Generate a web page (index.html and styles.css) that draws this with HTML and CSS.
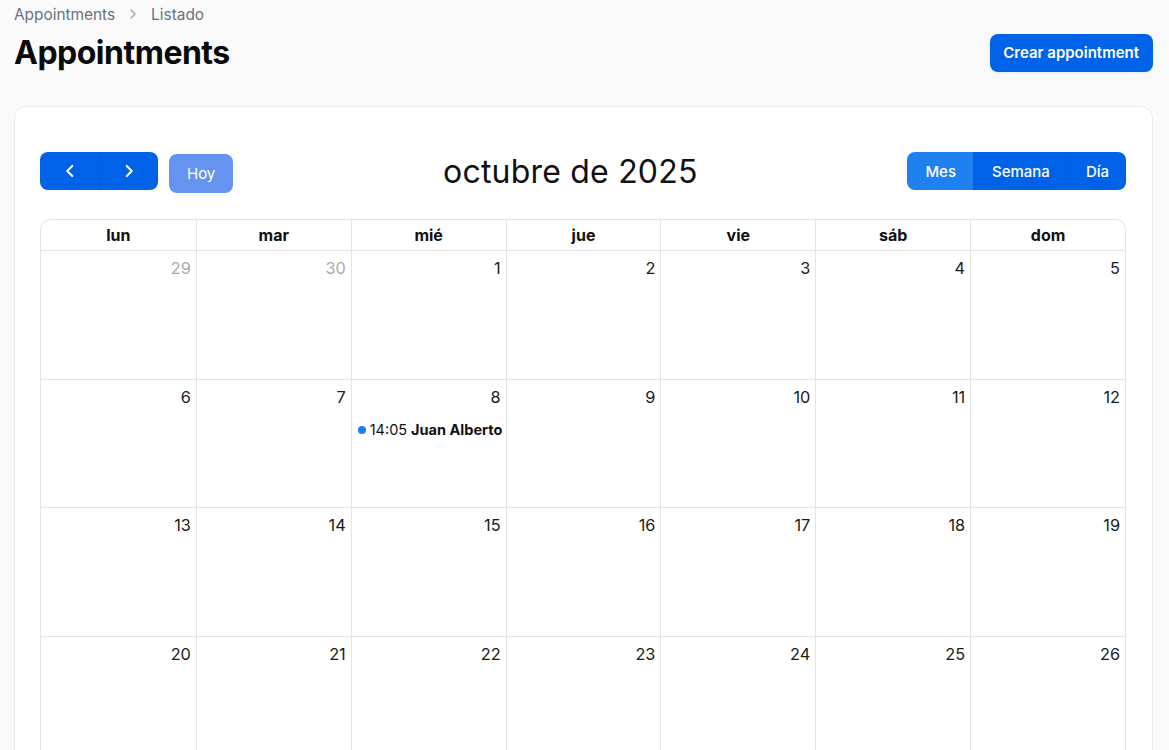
FILE: index.html
```html
<!DOCTYPE html>
<html lang="es">
<head>
<meta charset="utf-8">
<title>Appointments - Listado</title>
<link rel="stylesheet" href="styles.css">
</head>
<body>
<div class="page">
  <nav class="breadcrumbs">
    <a href="#">Appointments</a>
    <svg class="crumb-sep" viewBox="0 0 20 20" width="16" height="16"><path d="M7.5 5l5 5-5 5" fill="none" stroke="currentColor" stroke-width="1.6" stroke-linecap="round" stroke-linejoin="round"/></svg>
    <span>Listado</span>
  </nav>

  <header class="page-header">
    <h1 class="page-title">Appointments</h1>
    <a class="btn-primary" href="#">Crear appointment</a>
  </header>

  <section class="card">
    <div class="toolbar">
      <div class="toolbar-left">
        <div class="btn-group">
          <button class="cal-btn nav-btn" aria-label="prev">
            <svg viewBox="0 0 16 16" width="18" height="18"><path d="M10 3.5L5.5 8l4.5 4.5" fill="none" stroke="#fff" stroke-width="1.8" stroke-linecap="round" stroke-linejoin="round"/></svg>
          </button>
          <button class="cal-btn nav-btn" aria-label="next">
            <svg viewBox="0 0 16 16" width="18" height="18"><path d="M6 3.5L10.5 8 6 12.5" fill="none" stroke="#fff" stroke-width="1.8" stroke-linecap="round" stroke-linejoin="round"/></svg>
          </button>
        </div>
        <button class="cal-btn today-btn" disabled>Hoy</button>
      </div>
      <h2 class="cal-title">octubre de 2025</h2>
      <div class="btn-group">
        <button class="cal-btn view-btn active">Mes</button>
        <button class="cal-btn view-btn">Semana</button>
        <button class="cal-btn view-btn">Día</button>
      </div>
    </div>

    <div class="month">
      <div class="dow">lun</div>
      <div class="dow">mar</div>
      <div class="dow">mié</div>
      <div class="dow">jue</div>
      <div class="dow">vie</div>
      <div class="dow">sáb</div>
      <div class="dow">dom</div>

      <div class="day other"><span class="num">29</span></div>
      <div class="day other"><span class="num">30</span></div>
      <div class="day"><span class="num">1</span></div>
      <div class="day"><span class="num">2</span></div>
      <div class="day"><span class="num">3</span></div>
      <div class="day"><span class="num">4</span></div>
      <div class="day"><span class="num">5</span></div>

      <div class="day"><span class="num">6</span></div>
      <div class="day"><span class="num">7</span></div>
      <div class="day">
        <span class="num">8</span>
        <div class="event"><span class="dot"></span><span class="ev-time">14:05</span> <b class="ev-title">Juan Alberto</b></div>
      </div>
      <div class="day"><span class="num">9</span></div>
      <div class="day"><span class="num">10</span></div>
      <div class="day"><span class="num">11</span></div>
      <div class="day"><span class="num">12</span></div>

      <div class="day"><span class="num">13</span></div>
      <div class="day"><span class="num">14</span></div>
      <div class="day"><span class="num">15</span></div>
      <div class="day"><span class="num">16</span></div>
      <div class="day"><span class="num">17</span></div>
      <div class="day"><span class="num">18</span></div>
      <div class="day"><span class="num">19</span></div>

      <div class="day"><span class="num">20</span></div>
      <div class="day"><span class="num">21</span></div>
      <div class="day"><span class="num">22</span></div>
      <div class="day"><span class="num">23</span></div>
      <div class="day"><span class="num">24</span></div>
      <div class="day"><span class="num">25</span></div>
      <div class="day"><span class="num">26</span></div>
    </div>
  </section>
</div>
</body>
</html>
```

FILE: styles.css
```css
/* Appointments listing, month calendar */

body
{ margin: 0;
background: #fafafa;
font-family: Inter, "Noto Sans", sans-serif;
color: #111;
}

.page
{ padding: 0 16px 0 14px;
}

/* Breadcrumbs */

.breadcrumbs
{ display: flex;
align-items: center;
gap: 10px;
height: 28px;
font-size: 15.4px;
color: #6b7280;
}

.breadcrumbs a
{ color: #6b7280;
text-decoration: none;
}

.crumb-sep
{ color: #9ca3af;
}

/* Header */

.page-header
{ display: flex;
align-items: center;
justify-content: space-between;
margin-top: 6px;
}

.page-title
{ margin: 0;
font-size: 32px;
font-weight: 700;
letter-spacing: -0.5px;
line-height: 38px;
color: #0a0a0a;
}

.btn-primary
{ display: inline-block;
background: #0062e6;
color: #fff;
font-size: 15px;
font-weight: 600;
text-decoration: none;
padding: 0 14px 0 13px;
line-height: 38px;
border-radius: 8px;
box-shadow: 0 1px 2px rgba(0,0,0,0.08);
}

/* Card */

.card
{ margin-top: 34px;
background: #fff;
border: 1px solid #ececec;
border-radius: 12px;
padding: 45px 26px 20px 25px;
}

/* Toolbar */

.toolbar
{ display: flex;
align-items: flex-start;
justify-content: space-between;
height: 41px;
margin-bottom: 26px;
}

.toolbar-left
{ display: flex;
align-items: flex-start;
gap: 11px;
}

.btn-group
{ display: flex;
border-radius: 8px;
overflow: hidden;
height: 38px;
}

.cal-btn
{ border: 0;
margin: 0;
font-family: inherit;
font-size: 15px;
color: #fff;
background: #0062e6;
cursor: pointer;
}

.nav-btn
{ width: 59px;
display: flex;
align-items: center;
justify-content: center;
}

.nav-btn + .nav-btn
{ border-left: 1px solid #0a58cc;
}

.today-btn
{ height: 39px;
padding: 0 18px;
border-radius: 8px;
background: #6594f0;
margin-top: 2px;
}

.cal-title
{ margin: 0;
font-size: 32px;
line-height: 40px;
font-weight: 400;
color: #111;
letter-spacing: 0.2px;
}

.view-btn
{ padding: 0 17px 0 18px;
font-weight: 500;
}

.view-btn.active
{ background: #1f80ef;
}

.view-btn + .view-btn
{ border-left: 1px solid #0a5cd6;
}

/* Month grid */

.month
{ display: grid;
grid-template-columns: repeat(7, minmax(0, 1fr));
grid-template-rows: 31px;
grid-auto-rows: 128.7px;
border: 1px solid #e5e5e5;
border-bottom: 0;
border-radius: 10px 10px 0 0;
overflow: hidden;
}

.month .dow
{ line-height: 30px;
text-align: center;
font-weight: 700;
font-size: 16px;
color: #111;
border-bottom: 1px solid #e5e5e5;
border-left: 1px solid #e5e5e5;
}

.month .day
{ border-left: 1px solid #e5e5e5;
border-bottom: 1px solid #e5e5e5;
padding: 5px 5px 0 5px;
display: flex;
flex-direction: column;
align-items: flex-end;
}

.month .dow:nth-child(7n+1),
.month .day:nth-child(7n+1)
{ border-left: 0;
}

.num
{ font-size: 16.3px;
line-height: 24px;
color: #1a1a1a;
}

.other .num
{ color: #aaa;
}

.event
{ align-self: stretch;
margin-top: 12px;
font-size: 14.5px;
line-height: 18px;
white-space: nowrap;
display: flex;
align-items: center;
gap: 4px;
color: #111;
}

.dot
{ width: 8px;
height: 8px;
border-radius: 50%;
background: #1f7cf2;
margin-left: 1px;
flex: none;
}

.ev-title
{ font-weight: 700;
}
```
